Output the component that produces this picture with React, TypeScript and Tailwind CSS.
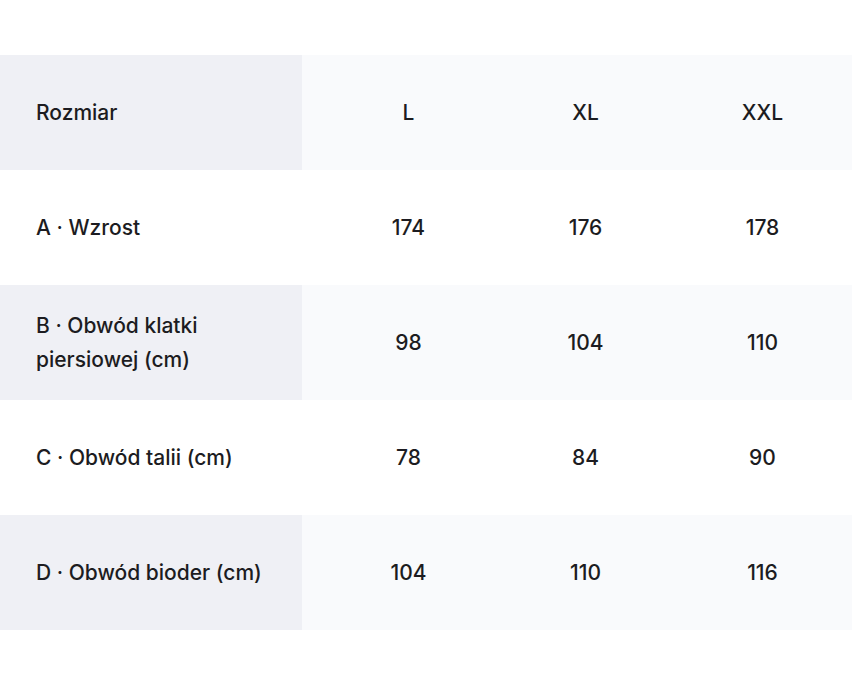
const sizes = ["L", "XL", "XXL"];

const rows: { label: string; values: string[] }[] = [
  { label: "A · Wzrost", values: ["174", "176", "178"] },
  { label: "B · Obwód klatki piersiowej (cm)", values: ["98", "104", "110"] },
  { label: "C · Obwód talii (cm)", values: ["78", "84", "90"] },
  { label: "D · Obwód bioder (cm)", values: ["104", "110", "116"] },
];

const Row = ({ label, values, shaded }: { label: string; values: string[]; shaded: boolean }) => (
  <div
    className={`grid grid-cols-[302px_177px_177px_177px_1fr] h-[115px] ${
      shaded ? "bg-[#f9fafc]" : "bg-white"
    }`}
  >
    <div className={`flex items-center pl-9 pr-6 leading-[34px] ${shaded ? "bg-[#eff0f5]" : ""}`}>
      {label}
    </div>
    {values.map((v, i) => (
      <div key={i} className="flex items-center justify-center pl-9">
        {v}
      </div>
    ))}
    <div />
  </div>
);

export default function App() {
  return (
    <div className="w-[852px] h-[700px] bg-white pt-[55px] text-[21px] font-medium text-[#1c1c21] font-['Inter',sans-serif]">
      <Row label="Rozmiar" values={sizes} shaded />
      {rows.map((r, i) => (
        <Row key={r.label} label={r.label} values={r.values} shaded={i % 2 === 1} />
      ))}
    </div>
  );
}
